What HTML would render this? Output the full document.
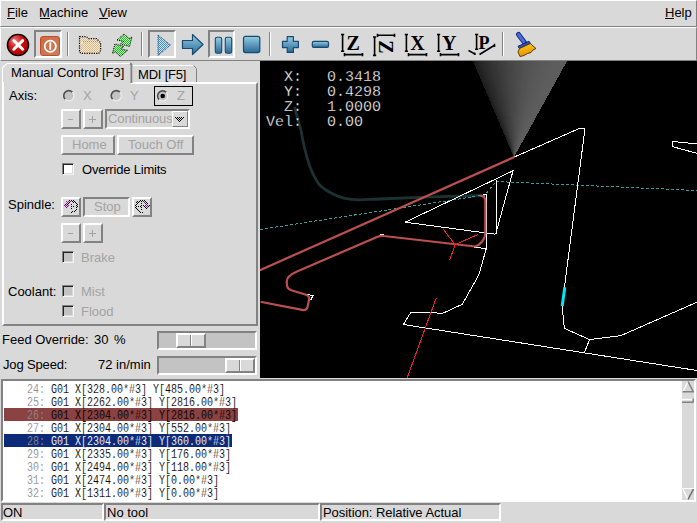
<!DOCTYPE html>
<html><head><meta charset="utf-8">
<style>
*{box-sizing:border-box;margin:0;padding:0}
html,body{width:697px;height:523px;overflow:hidden;background:#d9d9d9;font-family:"Liberation Sans",sans-serif;font-size:13px;color:#000}
.a{position:absolute}
.t{position:absolute;white-space:pre;line-height:1;}
.u{text-decoration:underline}
.raised{border-style:solid;border-width:2px;border-color:#fff #828282 #828282 #fff}
.sunk{border-style:solid;border-width:2px;border-color:#828282 #fff #fff #828282}
.dis{color:#a3a3a3}
.btn{position:absolute;border-style:solid;border-width:2px;border-color:#fff #828282 #828282 #fff;background:#d9d9d9}
.chk{position:absolute;width:12px;height:12px;border-style:solid;border-width:1px;border-color:#828282 #f4f4f4 #f4f4f4 #828282;box-shadow:inset 1px 1px 0 #222,inset -1px -1px 0 #d9d9d9;background:#c3c3c3}
.code{position:absolute;left:3px;white-space:pre;font-family:"Liberation Mono",monospace;font-size:13px;line-height:13px;height:13px;transform:scaleX(0.76923);transform-origin:0 0}
.dro{position:absolute;left:266px;white-space:pre;font-family:"Liberation Mono",monospace;font-size:15px;line-height:15px;color:#fff;-webkit-text-stroke:0.3px #000}
.mono{font-family:"Liberation Mono",monospace}
</style></head><body>
<!-- menubar -->
<div class="a" style="left:0;top:0;width:697px;height:27px;border-top:1px solid #fff;border-left:1px solid #fff;border-bottom:1px solid #828282;border-right:1px solid #828282"></div>
<div class="t" style="left:7px;top:6px">File</div>
<div class="t" style="left:39px;top:6px">Machine</div>
<div class="t" style="left:99px;top:6px">View</div>
<div class="t" style="left:665px;top:6px">Help</div>
<div class="a" style="left:7px;top:18px;width:8px;height:1px;background:#000"></div>
<div class="a" style="left:40px;top:18px;width:10px;height:1px;background:#000"></div>
<div class="a" style="left:99px;top:18px;width:9px;height:1px;background:#000"></div>
<div class="a" style="left:665px;top:18px;width:9px;height:1px;background:#000"></div>
<!-- toolbar -->
<div class="a" style="left:0;top:27px;width:697px;height:34px;border-top:1px solid #fff;border-left:1px solid #fff;border-bottom:1px solid #828282;border-right:1px solid #828282"></div>

<!-- toolbar icons -->
<div class="a sunk" style="left:34px;top:30px;width:28px;height:28px"></div>
<div class="a sunk" style="left:148px;top:30px;width:28px;height:28px"></div>
<div class="a sunk" style="left:208px;top:30px;width:27px;height:28px"></div>
<svg class="a" style="left:0;top:28px" width="560" height="32">
<defs>
<radialGradient id="rg" cx="0.35" cy="0.3" r="0.8"><stop offset="0" stop-color="#f08080"/><stop offset="0.45" stop-color="#d01010"/><stop offset="1" stop-color="#a00000"/></radialGradient>
<linearGradient id="bg" x1="0" y1="0" x2="0" y2="1"><stop offset="0" stop-color="#96cde4"/><stop offset="1" stop-color="#2a6a96"/></linearGradient>
<linearGradient id="og" x1="0" y1="0" x2="1" y2="1"><stop offset="0" stop-color="#d06a40"/><stop offset="1" stop-color="#c98060"/></linearGradient>
<pattern id="stip" width="2" height="2" patternUnits="userSpaceOnUse"><rect width="1" height="1" fill="#000"/><rect x="1" y="1" width="1" height="1" fill="#000"/></pattern>
<pattern id="tan" width="2" height="2" patternUnits="userSpaceOnUse"><rect width="2" height="2" fill="#f2e8d4"/><rect width="1" height="1" fill="#dcb98a"/><rect x="1" y="1" width="1" height="1" fill="#dcb98a"/></pattern>
<pattern id="grn" width="2" height="2" patternUnits="userSpaceOnUse"><rect width="2" height="2" fill="#c0ecc0"/><rect width="1" height="1" fill="#20c420"/><rect x="1" y="1" width="1" height="1" fill="#20c420"/></pattern>
<pattern id="blu" width="2" height="2" patternUnits="userSpaceOnUse"><rect width="2" height="2" fill="#c8e0ea"/><rect width="1" height="1" fill="#4a90b8"/><rect x="1" y="1" width="1" height="1" fill="#4a90b8"/></pattern>
</defs>
<!-- estop -->
<circle cx="18" cy="17" r="10.6" fill="url(#rg)" stroke="#000" stroke-width="1.4"/>
<path d="M13.8,12.6 L22.6,21.2 M22.6,12.6 L13.8,21.2" stroke="#fff" stroke-width="3" stroke-linecap="round"/>
<!-- power pressed frame -->

<rect x="40.5" y="8.5" width="19" height="19" rx="2.5" fill="url(#og)" stroke="#c04a28" stroke-width="1"/>
<circle cx="50.3" cy="18.3" r="5.6" fill="none" stroke="#fff" stroke-width="1.7"/>
<path d="M50.3,14.3 V21.7" stroke="#fff" stroke-width="1.7"/>
<!-- separators -->
<rect x="67" y="4" width="1" height="24" fill="#828282"/><rect x="68" y="4" width="1" height="24" fill="#fff"/>
<rect x="141" y="4" width="1" height="24" fill="#828282"/><rect x="142" y="4" width="1" height="24" fill="#fff"/>
<rect x="269" y="4" width="1" height="24" fill="#828282"/><rect x="270" y="4" width="1" height="24" fill="#fff"/>
<rect x="502" y="4" width="1" height="24" fill="#828282"/><rect x="503" y="4" width="1" height="24" fill="#fff"/>
<!-- folder -->
<path d="M79.5,8.7 H86.4 L88.7,10.6 H96.5 L100.6,14.7 V22.5 L98.8,25.3 H80.9 L79.5,24 Z" fill="url(#tan)" stroke="#000" stroke-width="1.2" stroke-dasharray="1.2 1.2"/>
<path d="M83,13.6 H99.7" stroke="#b08850" stroke-width="1" stroke-dasharray="1 1"/>
<path d="M83,13.6 L80.5,16" stroke="#fff" stroke-width="1"/>
<!-- reload -->
<path d="M117,12 L124,6 L129,10.5 L132,9 L129.5,18.5 L120.5,16 L123.5,13.5 Z" fill="url(#grn)" stroke="#000" stroke-width="1" stroke-dasharray="1 1"/>
<path d="M127.4,22.4 L120.4,28.4 L115.4,23.9 L112.4,25.4 L114.9,15.9 L123.9,18.4 L120.9,20.9 Z" fill="url(#grn)" stroke="#000" stroke-width="1" stroke-dasharray="1 1"/>
<!-- play pressed -->

<path d="M158,7 L170.5,17 L158,27.5 Z" fill="url(#blu)" stroke="#1a4a70" stroke-width="1" stroke-dasharray="1 1"/>
<!-- arrow -->
<path d="M182.5,12.5 H192.5 V6.5 L203,16.5 L192.5,26.5 V20.5 H182.5 Z" fill="url(#bg)" stroke="#174a72" stroke-width="1.2" stroke-linejoin="round"/>
<!-- pause pressed -->

<rect x="215.3" y="9.2" width="6.4" height="16" rx="1.8" fill="url(#bg)" stroke="#174a72" stroke-width="1.1"/>
<rect x="225.3" y="9.2" width="6.4" height="16" rx="1.8" fill="url(#bg)" stroke="#174a72" stroke-width="1.1"/>
<!-- stop -->
<rect x="243.5" y="8.3" width="16.3" height="16.3" rx="2" fill="url(#bg)" stroke="#174a72" stroke-width="1.2"/>
<!-- plus / minus -->
<path d="M287.2,8.6 H293.4 V13.4 H298.4 V19.6 H293.4 V24.4 H287.2 V19.6 H282.5 V13.4 H287.2 Z" fill="url(#bg)" stroke="#174a72" stroke-width="1.2" stroke-linejoin="round"/>
<rect x="312.3" y="13.4" width="16.2" height="6" rx="1.5" fill="url(#bg)" stroke="#174a72" stroke-width="1.2"/>
<!-- view brackets -->
<g stroke="#000" stroke-width="1.6" fill="none">
<path d="M342.6,6.5 V23.3 M341,6.5 H344.2 M341,23.3 H344.2"/>
<path d="M344.5,26.6 H362.5 M344.5,25 V28.2 M362.5,25 V28.2"/>
<path d="M374.6,9 V27.4 M373,9 H376.2 M373,27.4 H376.2"/>
<path d="M377.5,7.3 H394.5 M377.5,5.7 V8.9 M394.5,5.7 V8.9"/>
<path d="M406.4,6.5 V23.3 M404.8,6.5 H408 M404.8,23.3 H408"/>
<path d="M408.5,26.6 H426.5 M408.5,25 V28.2 M426.5,25 V28.2"/>
<path d="M438.6,6.5 V23.3 M437,6.5 H440.2 M437,23.3 H440.2"/>
<path d="M440.5,26.6 H458.5 M440.5,25 V28.2 M458.5,25 V28.2"/>
<path d="M476.6,6.5 V21.3 M475,6.5 H478.2 M475,21.3 H478.2"/>
<path d="M468.5,22.5 L475.8,26.4 M474.5,24.5 V27"/>
<path d="M479.5,26.5 L494.5,17.3 M494.5,15.8 V19"/>
</g>
<g font-family="Liberation Serif" font-weight="bold" font-size="17px" fill="#000" style="-webkit-font-smoothing:antialiased">
<text x="346.5" y="22" font-size="20px">Z</text>
<text x="410.3" y="22" font-size="20px">X</text>
<text x="442" y="22" font-size="20px">Y</text>
<text x="478.5" y="21.3" font-size="18px">P</text>
<text x="0" y="0" transform="translate(379,24.3) rotate(90) translate(-12,0)" font-size="20px">Z</text>
</g>
<!-- brush -->
<defs><linearGradient id="brg" x1="0" y1="0" x2="0.3" y2="1"><stop offset="0" stop-color="#ffd020"/><stop offset="1" stop-color="#e89000"/></linearGradient></defs>
<path d="M518.5,6.5 L524.5,14.5" stroke="#1a2c80" stroke-width="5" stroke-linecap="round"/>
<path d="M518.5,6.5 L524,14" stroke="#4a6ad8" stroke-width="3" stroke-linecap="round"/>
<path d="M518,18.3 L529,13.2 L530.5,15.5 L519.5,20.8 Z" fill="#3050b8" stroke="#101c60" stroke-width="0.9"/>
<path d="M519.5,20.5 L530.3,15.5 L536,20.5 L533,22 L531,24.5 L527.5,25.5 L524,27.5 L520,28.5 L518,24 Z" fill="url(#brg)" stroke="#4a3000" stroke-width="0.9" stroke-linejoin="round"/>
</svg>
<!-- notebook frame -->
<div class="a" style="left:2px;top:82px;width:256px;height:244px;border-style:solid;border-width:2px;border-color:#fff #828282 #828282 #fff"></div>
<!-- tab MDI -->
<svg class="a" style="left:0;top:58px" width="260" height="30">
<polyline points="132.5,25 132.5,7.5 193.5,7.5 196.5,10.5 196.5,24" fill="none" stroke="#fff" stroke-width="1"/>
<polyline points="193.5,7.5 196.5,10.5 196.5,24" fill="none" stroke="#828282" stroke-width="1"/>
<rect x="4" y="24" width="127" height="3" fill="#d9d9d9"/>
<polyline points="2.5,26 2.5,10 6.5,6 6.5,5.5 130,5.5" fill="none" stroke="#fff" stroke-width="1"/>
<polyline points="2.5,26 2.5,9.5 6,6" fill="none" stroke="#fff" stroke-width="1"/>
<path d="M130,5.5 L131,6 L131.5,7 L131.5,25" fill="none" stroke="#828282" stroke-width="2"/>
</svg>
<div class="t" style="left:11px;top:66px;letter-spacing:-0.05px">Manual Control [F3]</div>
<div class="t" style="left:138px;top:68px;letter-spacing:-0.2px">MDI [F5]</div>

<div class="t" style="left:9px;top:89px">Axis:</div>
<!-- radios -->
<svg class="a" style="left:60px;top:86px" width="140" height="22">
<circle cx="8.8" cy="9.7" r="5" fill="#c3c3c3"/>
<path d="M5.2,13.3 A5,5 0 0 1 12.4,6.1" fill="none" stroke="#505050" stroke-width="1.6"/>
<path d="M12.4,6.1 A5,5 0 0 1 5.2,13.3" fill="none" stroke="#eeeeee" stroke-width="1.2"/>
<circle cx="56.3" cy="9.7" r="5" fill="#c3c3c3"/>
<path d="M52.7,13.3 A5,5 0 0 1 59.9,6.1" fill="none" stroke="#505050" stroke-width="1.6"/>
<path d="M59.9,6.1 A5,5 0 0 1 52.7,13.3" fill="none" stroke="#eeeeee" stroke-width="1.2"/>
<rect x="94.5" y="0.5" width="38" height="19" fill="none" stroke="#000" stroke-width="1" shape-rendering="crispEdges"/>
<circle cx="102.7" cy="10" r="5" fill="#c3c3c3"/>
<path d="M99.1,13.6 A5,5 0 0 1 106.3,6.4" fill="none" stroke="#505050" stroke-width="1.6"/>
<path d="M106.3,6.4 A5,5 0 0 1 99.1,13.6" fill="none" stroke="#eeeeee" stroke-width="1.2"/>
<circle cx="102.7" cy="10" r="2.3" fill="#000"/>
</svg>
<div class="t dis" style="left:83px;top:89px">X</div>
<div class="t dis" style="left:130px;top:89px">Y</div>
<div class="t dis" style="left:177px;top:89px">Z</div>
<!-- jog buttons -->
<div class="btn" style="left:61px;top:109px;width:20px;height:20px"></div>
<div class="btn" style="left:83px;top:109px;width:20px;height:20px"></div>
<div class="a" style="left:68px;top:119px;width:5px;height:1px;background:#a3a3a3"></div>
<div class="a" style="left:89px;top:119px;width:7px;height:1px;background:#a3a3a3"></div>
<div class="a" style="left:92px;top:116px;width:1px;height:7px;background:#a3a3a3"></div>
<div class="a sunk" style="left:105px;top:109px;width:85px;height:20px"></div>
<div class="t dis" style="left:108px;top:112px;letter-spacing:-0.12px">Continuous</div>
<div class="a" style="left:172px;top:111px;width:16px;height:16px;border-style:solid;border-width:1px;border-color:#fff #828282 #828282 #fff;background:#d9d9d9"></div>
<svg class="a" style="left:174px;top:116px" width="12" height="7"><path d="M1,1h9M2,2h7M3,3h5M4,4h3M5,5h1" stroke="#000" stroke-width="1" stroke-dasharray="1 1" fill="none" transform="translate(0,0.5)"/></svg>
<div class="btn" style="left:61px;top:135px;width:54px;height:20px"></div>
<div class="btn" style="left:117px;top:135px;width:77px;height:20px"></div>
<div class="t dis" style="left:72px;top:138px">Home</div>
<div class="t dis" style="left:128px;top:138px">Touch Off</div>
<div class="chk" style="left:62px;top:163px;background:#fff"></div>
<div class="t" style="left:82px;top:163px;letter-spacing:-0.2px">Override Limits</div>

<div class="t" style="left:8px;top:198px">Spindle:</div>
<div class="btn" style="left:61px;top:197px;width:20px;height:20px"></div>
<div class="a sunk" style="left:83px;top:197px;width:47px;height:20px"></div>
<div class="t dis" style="left:94px;top:200px">Stop</div>
<div class="btn" style="left:132px;top:197px;width:20px;height:20px"></div>
<svg class="a" style="left:62px;top:198px" width="18" height="18" shape-rendering="crispEdges"><g fill="#000"><rect x="7" y="2" width="1" height="1"/><rect x="9" y="2" width="1" height="1"/><rect x="11" y="2" width="1" height="1"/><rect x="10" y="3" width="1" height="1"/><rect x="12" y="3" width="1" height="1"/><rect x="7" y="4" width="1" height="1"/><rect x="11" y="4" width="1" height="1"/><rect x="13" y="4" width="1" height="1"/><rect x="6" y="5" width="1" height="1"/><rect x="14" y="5" width="1" height="1"/><rect x="3" y="6" width="1" height="1"/><rect x="5" y="6" width="1" height="1"/><rect x="9" y="6" width="1" height="1"/><rect x="15" y="6" width="1" height="1"/><rect x="14" y="7" width="1" height="1"/><rect x="9" y="8" width="1" height="1"/><rect x="11" y="8" width="1" height="1"/><rect x="15" y="8" width="1" height="1"/><rect x="14" y="9" width="1" height="1"/><rect x="9" y="10" width="1" height="1"/><rect x="14" y="11" width="1" height="1"/><rect x="13" y="12" width="1" height="1"/><rect x="10" y="13" width="1" height="1"/><rect x="12" y="13" width="1" height="1"/><rect x="9" y="14" width="1" height="1"/></g><g fill="#a000a0"><rect x="6" y="3" width="1" height="1"/><rect x="8" y="3" width="1" height="1"/><rect x="5" y="4" width="1" height="1"/><rect x="4" y="5" width="1" height="1"/><rect x="2" y="7" width="1" height="1"/><rect x="4" y="7" width="1" height="1"/><rect x="6" y="7" width="1" height="1"/><rect x="3" y="8" width="1" height="1"/><rect x="5" y="8" width="1" height="1"/><rect x="4" y="9" width="1" height="1"/></g><rect x="4" y="3" width="1" height="1" fill="#606060"/></svg>
<svg class="a" style="left:133px;top:198px" width="18" height="18" shape-rendering="crispEdges"><g fill="#000"><rect x="7" y="2" width="1" height="1"/><rect x="9" y="2" width="1" height="1"/><rect x="11" y="2" width="1" height="1"/><rect x="4" y="3" width="1" height="1"/><rect x="6" y="3" width="1" height="1"/><rect x="8" y="3" width="1" height="1"/><rect x="12" y="3" width="1" height="1"/><rect x="3" y="4" width="1" height="1"/><rect x="5" y="4" width="1" height="1"/><rect x="13" y="4" width="1" height="1"/><rect x="4" y="5" width="1" height="1"/><rect x="8" y="5" width="1" height="1"/><rect x="14" y="5" width="1" height="1"/><rect x="3" y="6" width="1" height="1"/><rect x="2" y="7" width="1" height="1"/><rect x="8" y="7" width="1" height="1"/><rect x="10" y="7" width="1" height="1"/><rect x="16" y="7" width="1" height="1"/><rect x="3" y="8" width="1" height="1"/><rect x="5" y="8" width="1" height="1"/><rect x="7" y="8" width="1" height="1"/><rect x="11" y="8" width="1" height="1"/><rect x="15" y="8" width="1" height="1"/><rect x="2" y="9" width="1" height="1"/><rect x="8" y="9" width="1" height="1"/><rect x="12" y="9" width="1" height="1"/><rect x="3" y="10" width="1" height="1"/><rect x="13" y="10" width="1" height="1"/><rect x="4" y="11" width="1" height="1"/><rect x="8" y="11" width="1" height="1"/><rect x="5" y="12" width="1" height="1"/><rect x="6" y="13" width="1" height="1"/><rect x="7" y="14" width="1" height="1"/><rect x="9" y="14" width="1" height="1"/></g><g fill="#a000a0"><rect x="10" y="3" width="1" height="1"/><rect x="11" y="4" width="1" height="1"/><rect x="12" y="5" width="1" height="1"/><rect x="13" y="6" width="1" height="1"/><rect x="12" y="7" width="1" height="1"/><rect x="14" y="7" width="1" height="1"/><rect x="13" y="8" width="1" height="1"/></g><rect x="14" y="9" width="1" height="1" fill="#a02020"/></svg>
<div class="btn" style="left:61px;top:223px;width:20px;height:20px"></div>
<div class="btn" style="left:83px;top:223px;width:20px;height:20px"></div>
<div class="a" style="left:68px;top:233px;width:5px;height:1px;background:#a3a3a3"></div>
<div class="a" style="left:89px;top:233px;width:7px;height:1px;background:#a3a3a3"></div>
<div class="a" style="left:92px;top:230px;width:1px;height:7px;background:#a3a3a3"></div>
<div class="chk" style="left:62px;top:251px"></div>
<div class="t dis" style="left:81px;top:251px">Brake</div>

<div class="t" style="left:8px;top:285px">Coolant:</div>
<div class="chk" style="left:62px;top:285px"></div>
<div class="t dis" style="left:81px;top:285px">Mist</div>
<div class="chk" style="left:62px;top:305px"></div>
<div class="t dis" style="left:81px;top:305px">Flood</div>

<div class="t" style="left:2px;top:333px">Feed Override:</div>
<div class="t" style="left:94px;top:333px">30</div>
<div class="t" style="left:114px;top:333px">%</div>
<div class="t" style="left:3px;top:358px;letter-spacing:-0.15px">Jog Speed:</div>
<div class="t" style="left:98px;top:358px">72 in/min</div>
<div class="a sunk" style="left:157px;top:331px;width:100px;height:19px;background:#c3c3c3"></div>
<div class="btn" style="left:176px;top:333px;width:30px;height:15px"></div>
<div class="a" style="left:190px;top:335px;width:1px;height:11px;background:#828282"></div>
<div class="a" style="left:191px;top:335px;width:1px;height:11px;background:#fff"></div>
<div class="a sunk" style="left:157px;top:356px;width:100px;height:19px;background:#c3c3c3"></div>
<div class="btn" style="left:225px;top:358px;width:30px;height:15px"></div>
<div class="a" style="left:239px;top:360px;width:1px;height:11px;background:#828282"></div>
<div class="a" style="left:240px;top:360px;width:1px;height:11px;background:#fff"></div>

<!-- 3d view -->
<div class="a" style="left:260px;top:61px;width:437px;height:317px;background:#000"></div>
<svg class="a" style="left:260px;top:61px" width="437" height="317" viewBox="260 61 437 317">
<g shape-rendering="crispEdges">
<path d="M513.9,157.2 L473.00,61.0 L475.65,61.0 Z" fill="#1e1e1e"/>
<path d="M513.9,157.2 L475.35,61.0 L477.99,61.0 Z" fill="#212121"/>
<path d="M513.9,157.2 L477.69,61.0 L480.33,61.0 Z" fill="#252525"/>
<path d="M513.9,157.2 L480.03,61.0 L482.68,61.0 Z" fill="#282828"/>
<path d="M513.9,157.2 L482.38,61.0 L485.03,61.0 Z" fill="#2b2b2b"/>
<path d="M513.9,157.2 L484.73,61.0 L487.37,61.0 Z" fill="#2d2d2d"/>
<path d="M513.9,157.2 L487.07,61.0 L489.71,61.0 Z" fill="#303030"/>
<path d="M513.9,157.2 L489.41,61.0 L492.06,61.0 Z" fill="#333333"/>
<path d="M513.9,157.2 L491.76,61.0 L494.41,61.0 Z" fill="#353535"/>
<path d="M513.9,157.2 L494.11,61.0 L496.75,61.0 Z" fill="#373737"/>
<path d="M513.9,157.2 L496.45,61.0 L499.10,61.0 Z" fill="#3a3a3a"/>
<path d="M513.9,157.2 L498.80,61.0 L501.44,61.0 Z" fill="#3c3c3c"/>
<path d="M513.9,157.2 L501.14,61.0 L503.79,61.0 Z" fill="#3e3e3e"/>
<path d="M513.9,157.2 L503.49,61.0 L506.13,61.0 Z" fill="#404040"/>
<path d="M513.9,157.2 L505.83,61.0 L508.47,61.0 Z" fill="#434343"/>
<path d="M513.9,157.2 L508.17,61.0 L510.82,61.0 Z" fill="#454545"/>
<path d="M513.9,157.2 L510.52,61.0 L513.16,61.0 Z" fill="#464646"/>
<path d="M513.9,157.2 L512.87,61.0 L515.51,61.0 Z" fill="#484848"/>
<path d="M513.9,157.2 L515.21,61.0 L517.85,61.0 Z" fill="#4a4a4a"/>
<path d="M513.9,157.2 L517.55,61.0 L520.20,61.0 Z" fill="#4c4c4c"/>
<path d="M513.9,157.2 L519.90,61.0 L522.54,61.0 Z" fill="#4d4d4d"/>
<path d="M513.9,157.2 L522.25,61.0 L524.89,61.0 Z" fill="#4f4f4f"/>
<path d="M513.9,157.2 L524.59,61.0 L527.23,61.0 Z" fill="#515151"/>
<path d="M513.9,157.2 L526.93,61.0 L529.58,61.0 Z" fill="#525252"/>
<path d="M513.9,157.2 L529.28,61.0 L531.92,61.0 Z" fill="#535353"/>
<path d="M513.9,157.2 L531.62,61.0 L534.27,61.0 Z" fill="#555555"/>
<path d="M513.9,157.2 L533.97,61.0 L536.61,61.0 Z" fill="#565656"/>
<path d="M513.9,157.2 L536.31,61.0 L538.96,61.0 Z" fill="#575757"/>
<path d="M513.9,157.2 L538.66,61.0 L541.30,61.0 Z" fill="#585858"/>
<path d="M513.9,157.2 L541.00,61.0 L543.65,61.0 Z" fill="#595959"/>
<path d="M513.9,157.2 L543.35,61.0 L545.99,61.0 Z" fill="#5a5a5a"/>
<path d="M513.9,157.2 L545.69,61.0 L548.34,61.0 Z" fill="#5a5a5a"/>
<path d="M513.9,157.2 L548.04,61.0 L550.68,61.0 Z" fill="#5b5b5b"/>
<path d="M513.9,157.2 L550.38,61.0 L553.03,61.0 Z" fill="#5c5c5c"/>
<path d="M513.9,157.2 L552.73,61.0 L555.37,61.0 Z" fill="#5c5c5c"/>
<path d="M513.9,157.2 L555.07,61.0 L557.72,61.0 Z" fill="#5d5d5d"/>
<path d="M513.9,157.2 L557.42,61.0 L560.06,61.0 Z" fill="#5d5d5d"/>
<path d="M513.9,157.2 L559.76,61.0 L562.41,61.0 Z" fill="#5d5d5d"/>
<path d="M513.9,157.2 L562.11,61.0 L564.75,61.0 Z" fill="#5d5d5d"/>
<path d="M513.9,157.2 L564.45,61.0 L567.10,61.0 Z" fill="#5d5d5d"/>
</g>
<path d="M294.5,107 C295.00,108.83 296.45,114.17 297.5,118 C298.55,121.83 299.55,124.67 300.8,130 C302.05,135.33 303.25,143.33 305,150 C306.75,156.67 308.85,164.17 311.3,170 C313.75,175.83 316.08,181.00 319.7,185 C323.32,189.00 328.78,191.78 333,194 C337.22,196.22 340.73,197.33 345,198.3 C349.27,199.27 352.77,199.68 358.6,199.8 C364.43,199.92 368.93,199.45 380,199 C391.07,198.55 408.00,197.68 425,197.1 C442.00,196.52 472.50,195.77 482,195.5" fill="none" stroke="#1c3232" stroke-width="2.8"/>
<path d="M260,229.5 L485,195 L496,181.5 L697,190.5" fill="none" stroke="#3a9c9c" stroke-width="1" stroke-dasharray="3 2" shape-rendering="crispEdges"/>
<g fill="none" stroke="#fff" stroke-width="1" shape-rendering="crispEdges">
<path d="M513.9,157.2 L579.1,128.6 L584.6,128.6 L584.6,131.6 L564.3,288.2 L562.2,306 L564.3,328.3 L589.5,339.6 L620.7,335.7 L697,302.2"/>
<path d="M589.5,339.6 L584.4,352.7"/>
<path d="M403.4,324.5 L697,370.5"/>
<path d="M403.4,324.5 L410.9,312.2 L442.9,313.2 L462.3,304.3 L478.9,274.8 L486.3,248.5 L486.3,194 L483.3,194"/>
<path d="M473.9,247.3 L486.3,248.5"/>
<path d="M405.2,222.2 L513,170.8 L495.9,233.5 M405.2,222.2 L483.9,232.7 L494.4,234.1 L495.9,233.5 M496.2,179.9 L496.2,233.5"/>
<path d="M697,143.9 L672.4,141.4 L672.4,146.6 L697,153.3"/>
<path d="M307,294.5 L313,295.5 L310.5,300.5"/>
<path d="M380,234.5 L384,234.8"/>
</g>
<g fill="none" stroke="#bc5050" stroke-width="2.2" stroke-linejoin="round" stroke-linecap="round">
<path d="M513.9,157.2 L260,270.2"/>
<path d="M481,195.8 C484,196 485.3,198 485.3,201 L485.3,233.5 C485.3,239 480.5,245 475,246.5 L384,236 Q380.5,235.5 377,237 L297,271.5 C289,275 286.7,278 286.7,281.5 L287.2,286.5 C288,289 290,290 292,290.5 L305.3,294.5 C308,295.5 309.6,296.5 309.2,299 L307.5,307 C306.8,309.5 305,310.3 303.5,310.2 L261.6,302"/>
</g>
<g fill="none" stroke="#f02020" stroke-width="1" shape-rendering="crispEdges">
<path d="M443,228.9 L455.2,244.7 L449.5,260.4 M455.2,244.7 L477.6,234.6 M436.2,298.1 L407.1,378"/>
</g>
<path d="M564.8,287.3 L562.2,306" stroke="#00e4f4" stroke-width="3"/>
</svg>
<div class="dro" style="top:70px">  X:</div><div class="dro" style="top:70px;left:327px">0.3418</div>
<div class="dro" style="top:85px">  Y:</div><div class="dro" style="top:85px;left:327px">0.4298</div>
<div class="dro" style="top:100px">  Z:</div><div class="dro" style="top:100px;left:327px">1.0000</div>
<div class="dro" style="top:115px">Vel:</div><div class="dro" style="top:115px;left:327px">0.00</div>

<!-- text widget -->
<div class="a" style="left:1px;top:379px;width:695px;height:123px;background:#fff;border-style:solid;border-width:2px;border-color:#828282 #fff #fff #828282"></div>
<div class="a" style="left:682px;top:381px;width:12px;height:119px;background:#d9d9d9"></div>
<svg class="a" style="left:682px;top:381px" width="12" height="119">
<path d="M6,0.5 L0.8,11" stroke="#fff" stroke-width="1.3" fill="none"/>
<path d="M6,0.5 L11.2,10.5 M0.5,10.8 H12" stroke="#828282" stroke-width="1.6" fill="none"/>
<path d="M0,18.5 H12" stroke="#fff" stroke-width="1.5"/>
<path d="M0,21.2 H11.5 M11.2,17.5 V21.5" stroke="#828282" stroke-width="1.5"/>
<path d="M0,107.5 H12" stroke="#fff" stroke-width="1"/>
<path d="M0.8,108 L6,118.5" stroke="#fff" stroke-width="1.3" fill="none"/>
<path d="M11.5,108 L6,118.5" stroke="#707070" stroke-width="1.6" fill="none"/>
</svg>

<!-- code -->
<div class="a" style="left:4px;top:408px;width:234px;height:13px;background:#8a4242"></div>
<div class="a" style="left:4px;top:434px;width:228px;height:13px;background:#0c2a78"></div>
<div class="code" style="top:383px;-webkit-text-stroke:0.12px #fff"><span style="color:#8c8c8c">    24:</span> <span style="color:#000">G01 X[328.00*#3] Y[485.00*#3]</span></div>
<div class="code" style="top:396px;-webkit-text-stroke:0.12px #fff"><span style="color:#8c8c8c">    25:</span> <span style="color:#000">G01 X[2262.00*#3] Y[2816.00*#3]</span></div>
<div class="code" style="top:409px;-webkit-text-stroke:0.12px #8a4242"><span style="color:#8c8c8c">    26:</span> <span style="color:#000">G01 X[2304.00*#3] Y[2816.00*#3]</span></div>
<div class="code" style="top:422px;-webkit-text-stroke:0.12px #fff"><span style="color:#8c8c8c">    27:</span> <span style="color:#000">G01 X[2304.00*#3] Y[552.00*#3]</span></div>
<div class="code" style="top:435px;-webkit-text-stroke:0.12px #0c2a78"><span style="color:#8c8c8c">    28:</span> <span style="color:#fff">G01 X[2304.00*#3] Y[360.00*#3]</span></div>
<div class="code" style="top:448px;-webkit-text-stroke:0.12px #fff"><span style="color:#8c8c8c">    29:</span> <span style="color:#000">G01 X[2335.00*#3] Y[176.00*#3]</span></div>
<div class="code" style="top:461px;-webkit-text-stroke:0.12px #fff"><span style="color:#8c8c8c">    30:</span> <span style="color:#000">G01 X[2494.00*#3] Y[118.00*#3]</span></div>
<div class="code" style="top:474px;-webkit-text-stroke:0.12px #fff"><span style="color:#8c8c8c">    31:</span> <span style="color:#000">G01 X[2474.00*#3] Y[0.00*#3]</span></div>
<div class="code" style="top:487px;-webkit-text-stroke:0.12px #fff"><span style="color:#8c8c8c">    32:</span> <span style="color:#000">G01 X[1311.00*#3] Y[0.00*#3]</span></div>
<!-- status -->
<div class="a sunk" style="left:1px;top:503px;width:103px;height:18px"></div>
<div class="a sunk" style="left:104px;top:503px;width:216px;height:18px"></div>
<div class="a sunk" style="left:320px;top:503px;width:181px;height:18px"></div>
<div class="t" style="left:3px;top:506px">ON</div>
<div class="t" style="left:107px;top:506px">No tool</div>
<div class="t" style="left:323px;top:506px;letter-spacing:-0.05px">Position: Relative Actual</div>
</body></html>
